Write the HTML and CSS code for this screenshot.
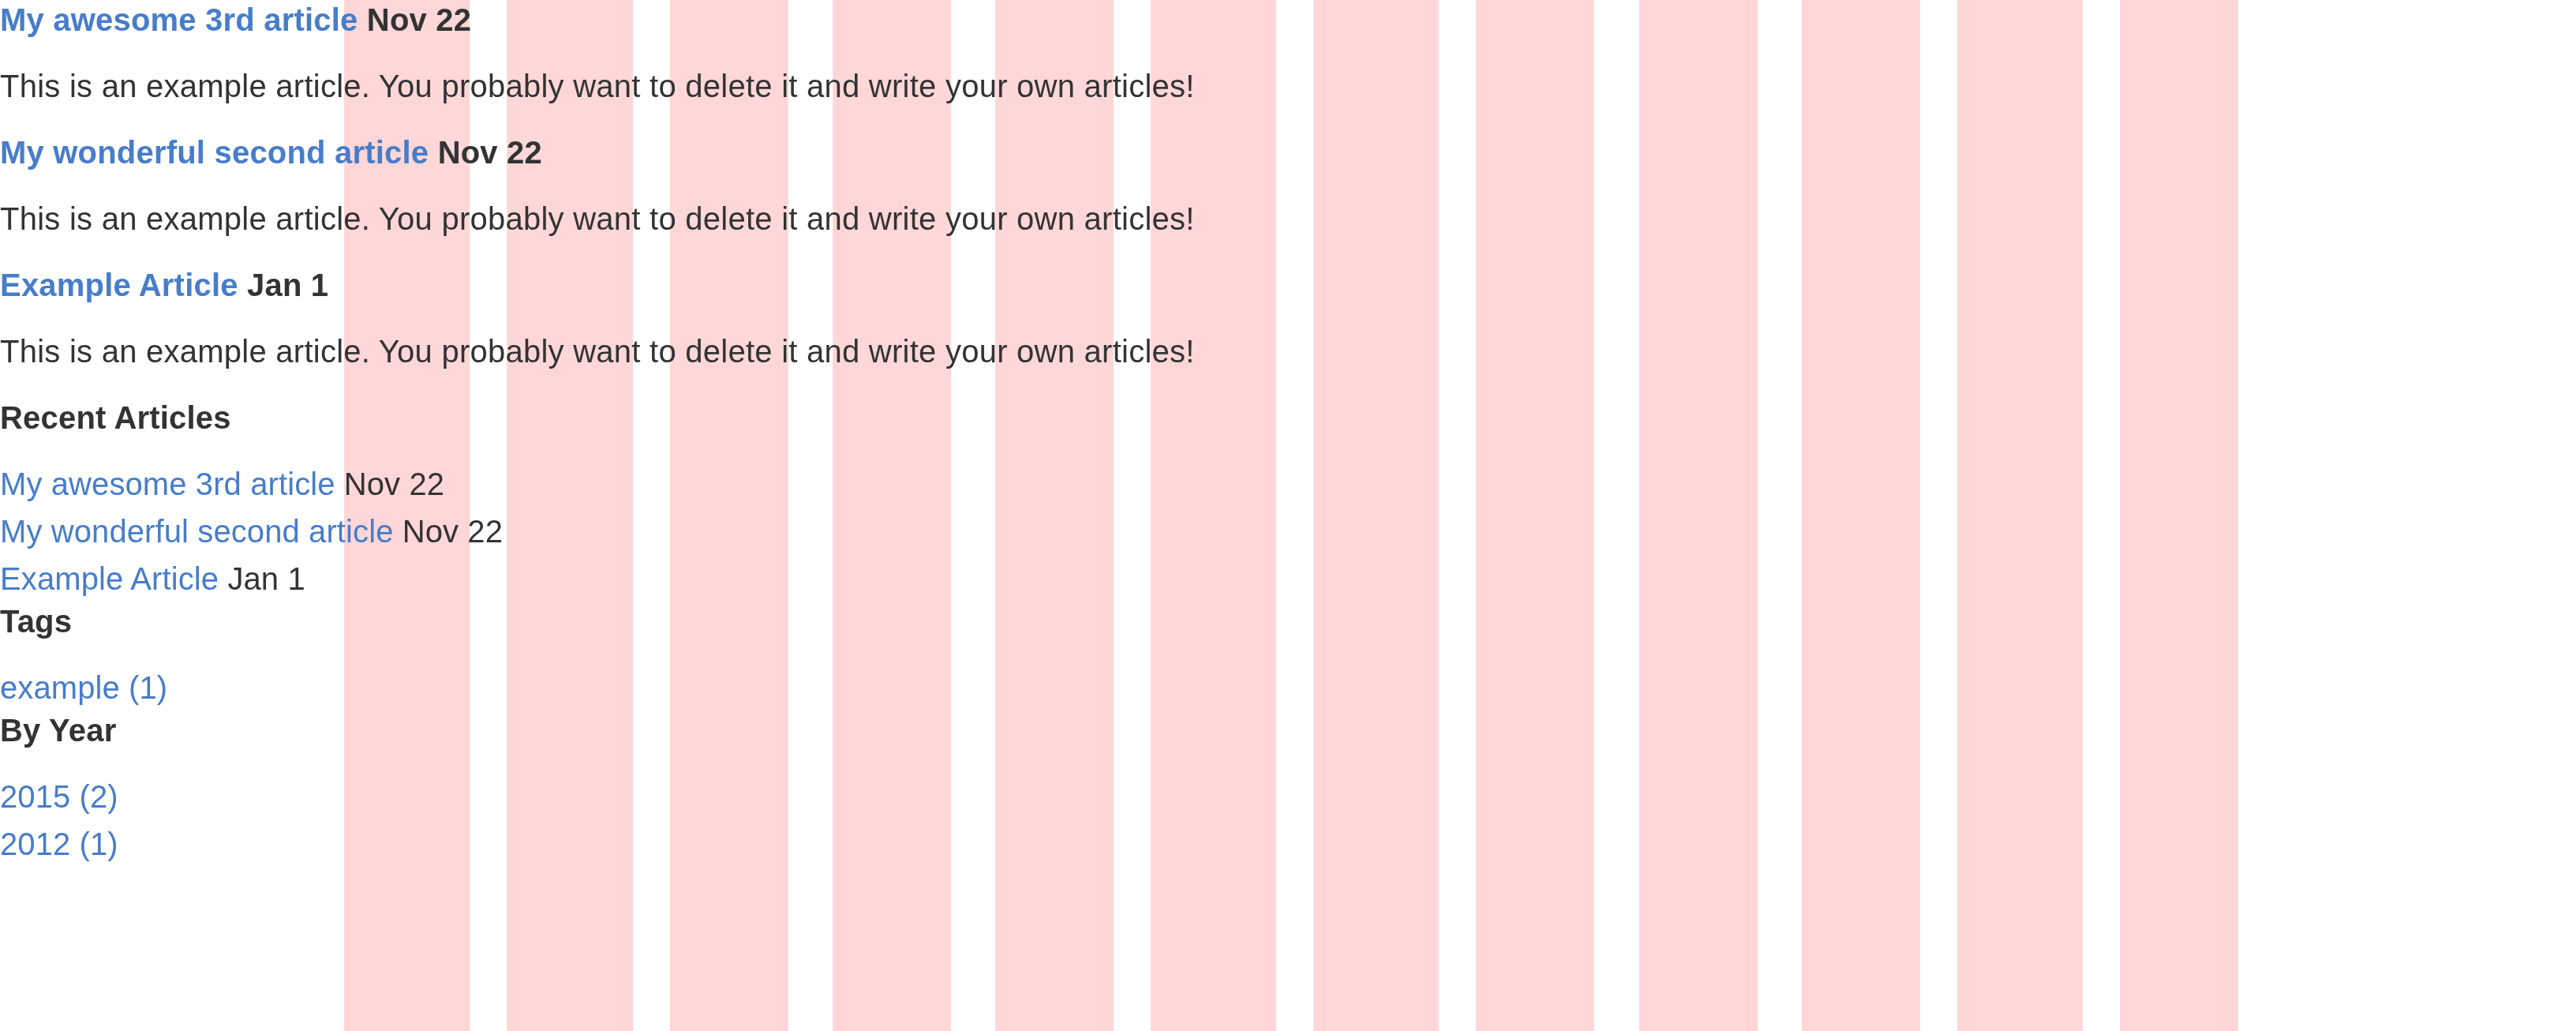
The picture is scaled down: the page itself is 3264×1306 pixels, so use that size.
FILE: index.html
```html
<!DOCTYPE html>
<html lang="en">
<head>
<meta charset="utf-8">
<title>Blog</title>
<link rel="stylesheet" href="styles.css">
</head>
<body>
<div class="visual-grid" aria-hidden="true">
  <div class="grid-col wide"></div>
  <div class="grid-col wider"></div>
  <div class="grid-col"></div>
  <div class="grid-col gap-wide"></div>
  <div class="grid-col gap-wide"></div>
  <div class="grid-col wide"></div>
  <div class="grid-col wide"></div>
  <div class="grid-col"></div>
  <div class="grid-col gap-wider"></div>
  <div class="grid-col gap-wide"></div>
  <div class="grid-col wide"></div>
  <div class="grid-col"></div>
</div>

<main class="articles">
  <article class="article">
    <h2 class="article-title"><a href="#">My awesome 3rd article</a> <span class="date">Nov 22</span></h2>
    <p class="article-body">This is an example article. You probably want to delete it and write your own articles!</p>
  </article>
  <article class="article">
    <h2 class="article-title"><a href="#">My wonderful second article</a> <span class="date">Nov 22</span></h2>
    <p class="article-body">This is an example article. You probably want to delete it and write your own articles!</p>
  </article>
  <article class="article">
    <h2 class="article-title"><a href="#">Example Article</a> <span class="date">Jan 1</span></h2>
    <p class="article-body">This is an example article. You probably want to delete it and write your own articles!</p>
  </article>
</main>

<aside class="sidebar">
  <h2 class="sidebar-title">Recent Articles</h2>
  <ul class="link-list">
    <li><a href="#">My awesome 3rd article</a> Nov 22</li>
    <li><a href="#">My wonderful second article</a> Nov 22</li>
    <li><a href="#">Example Article</a> Jan 1</li>
  </ul>
  <h2 class="sidebar-title">Tags</h2>
  <ul class="link-list">
    <li><a href="#">example (1)</a></li>
  </ul>
  <h2 class="sidebar-title">By Year</h2>
  <ul class="link-list">
    <li><a href="#">2015 (2)</a></li>
    <li><a href="#">2012 (1)</a></li>
  </ul>
</aside>
</body>
</html>
```

FILE: styles.css
```css
html {
  background: #ffffff;
}

body {
  margin: 0;
  padding-top: 1px;
  font-family: "Liberation Sans", Arial, Helvetica, sans-serif;
  font-size: 40px;
  line-height: 1.5;
  color: #333333;
}

a {
  color: #477dca;
  text-decoration: none;
}

/* visual grid overlay (drawn behind the content) */
.visual-grid {
  position: fixed;
  top: 0;
  left: 0;
  right: 0;
  bottom: 0;
  z-index: -1;
  display: flex;
  padding-left: 436px;
  pointer-events: none;
}

.grid-col {
  flex: none;
  width: 150px;
  margin-left: 47px;
  background: #ffd7d8;
}

.grid-col:first-child {
  margin-left: 0;
}

.grid-col.wide {
  width: 159px;
}

.grid-col.wider {
  width: 160px;
}

.grid-col.gap-wide {
  margin-left: 56px;
}

.grid-col.gap-wider {
  margin-left: 57px;
}

/* content */
.article-title,
.sidebar-title {
  margin: 0 0 30px;
  font-size: 40px;
  line-height: 1.2;
  font-weight: bold;
  letter-spacing: 0.2px;
}

.article-body {
  margin: 0 0 30px;
  letter-spacing: 0.25px;
}

.link-list {
  list-style: none;
  margin: 0;
  padding: 0;
  letter-spacing: 0.1px;
}
```
